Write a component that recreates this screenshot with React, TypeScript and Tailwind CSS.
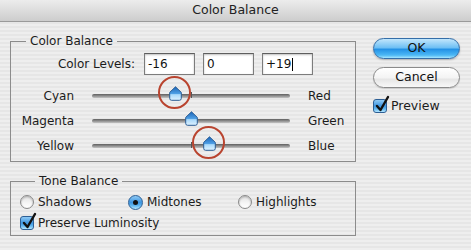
import { useId } from 'react';

const font = { fontFamily: '"DejaVu Sans", "Liberation Sans", sans-serif' };

type SliderRow = { left: string; right: string; value: number; marked?: boolean };

const sliderRows: SliderRow[] = [
  { left: 'Cyan', right: 'Red', value: -16, marked: true },
  { left: 'Magenta', right: 'Green', value: 0 },
  { left: 'Yellow', right: 'Blue', value: 19, marked: true },
];

const TRACK_WIDTH = 198;

function Thumb() {
  const id = useId();
  return (
    <svg width="13" height="15" viewBox="0 0 13 15" aria-hidden="true">
      <defs>
        <linearGradient id={id} x1="0" y1="0" x2="0" y2="1">
          <stop offset="0" stopColor="#1a64b8" />
          <stop offset="0.5" stopColor="#4f9fe4" />
          <stop offset="0.58" stopColor="#a9d9fb" />
          <stop offset="1" stopColor="#def2ff" />
        </linearGradient>
      </defs>
      <path
        d="M6.5 0.8 L12.3 6.4 V12.4 Q12.3 14.3 10.4 14.3 H2.6 Q0.7 14.3 0.7 12.4 V6.4 Z"
        fill={`url(#${id})`}
        stroke="#2a5c93"
        strokeWidth="1"
      />
    </svg>
  );
}

function Slider({ value, marked }: { value: number; marked?: boolean }) {
  // thumb centre along the track, -100..+100
  const x = TRACK_WIDTH / 2 + value * 0.99;
  return (
    <div className="relative flex items-center w-[198px] h-[25px]">
      <div className="w-full h-[4px] rounded-full bg-linear-to-b from-[#5f5f5f] to-[#c4c4c4]" />
      <div className="absolute left-[99px] top-[9px] w-px h-[6px] bg-[#555]" />
      <div className="absolute top-[3px]" style={{ left: x - 6.5 }}>
        <Thumb />
      </div>
      {marked && (
        <div
          className="absolute top-[-7px] w-[33px] h-[33px] rounded-full border-[2.5px] border-[#b9442f] pointer-events-none z-10"
          style={{ left: x - 17.5 }}
        />
      )}
    </div>
  );
}

function Field({ value, caret }: { value: string; caret?: boolean }) {
  return (
    <div className="w-[51px] h-[22px] bg-white border border-[#7c7c7c] border-t-[#5e5e5e] shadow-[inset_0_1px_2px_rgba(0,0,0,0.25)] flex items-center pl-[3px] text-[12px] text-[#111]">
      {value}
      {caret && <span className="ml-px w-px h-[13px] bg-black" />}
    </div>
  );
}

function AquaCheck() {
  return (
    <div className="relative w-[14px] h-[14px] shrink-0 rounded-[3px] border border-[#2d5f95] bg-[linear-gradient(to_bottom,#8fcaf5_0%,#3d95e0_50%,#63b8f0_75%,#b4e6ff_100%)]">
      <svg
        className="absolute left-[1px] top-[-4px] overflow-visible"
        width="14"
        height="16"
        viewBox="0 0 14 16"
        aria-hidden="true"
      >
        <path d="M2 10 L5.5 14 L13 1" fill="none" stroke="#111" strokeWidth="2.4" strokeLinecap="round" strokeLinejoin="round" />
      </svg>
    </div>
  );
}

function Radio({ selected, label, width }: { selected?: boolean; label: string; width: string }) {
  return (
    <div className={`flex items-center gap-[4px] ${width}`}>
      {selected ? (
        <div className="w-[15px] h-[15px] shrink-0 rounded-full border border-[#2d5f95] bg-[linear-gradient(to_bottom,#8fcaf5_0%,#3d95e0_50%,#63b8f0_75%,#b4e6ff_100%)] flex items-center justify-center">
          <div className="w-[5px] h-[5px] rounded-full bg-[#111]" />
        </div>
      ) : (
        <div className="w-[14px] h-[14px] shrink-0 rounded-full border border-[#8a8a8a] bg-[linear-gradient(to_bottom,#e2e2e2_0%,#f6f6f6_60%,#ffffff_100%)] shadow-[inset_0_1px_2px_rgba(0,0,0,0.25)]" />
      )}
      <span>{label}</span>
    </div>
  );
}

export default function App() {
  return (
    <div
      className="w-[471px] h-[250px] flex flex-col overflow-hidden text-[12px] text-[#1c1c1c] bg-[repeating-linear-gradient(to_bottom,#eeeeee_0px,#eeeeee_2px,#e6e6e6_2px,#e6e6e6_4px)]"
      style={font}
    >
      {/* Title bar */}
      <div className="h-[22px] shrink-0 flex items-center justify-center bg-linear-to-b from-[#ececec] to-[#cdcdcd] border-b border-[#9a9a9a] text-[12.5px] text-[#222]">
        Color Balance
      </div>

      <div className="flex pl-[10px] pt-[11px] gap-[17px]">
        {/* Left column */}
        <div className="w-[346px] flex flex-col">
          <fieldset className="border border-[#8c8c8c] pb-[3px]">
            <legend className="ml-[15px] px-[4px] leading-[16px]">Color Balance</legend>
            <div className="flex items-center gap-[9px] pt-[4px]">
              <span className="w-[124px] text-right">Color Levels:</span>
              <div className="flex gap-[8px]">
                <Field value="-16" />
                <Field value="0" />
                <Field value="+19" caret />
              </div>
            </div>
            <div className="flex flex-col mt-[8px]">
              {sliderRows.map((row) => (
                <div key={row.left} className="flex items-center h-[25px]">
                  <span className="w-[63px] text-right">{row.left}</span>
                  <div className="ml-[18px]">
                    <Slider value={row.value} marked={row.marked} />
                  </div>
                  <span className="ml-[18px]">{row.right}</span>
                </div>
              ))}
            </div>
          </fieldset>

          <fieldset className="mt-[11px] border border-[#8c8c8c] pl-[9px] pt-[4px] pb-[3px]">
            <legend className="ml-[15px] px-[4px] leading-[16px]">Tone Balance</legend>
            <div className="flex items-center h-[18px]">
              <Radio label="Shadows" width="w-[108px]" />
              <Radio label="Midtones" width="w-[110px]" selected />
              <Radio label="Highlights" width="w-[100px]" />
            </div>
            <div className="flex items-center gap-[4px] h-[18px] mt-[3px]">
              <AquaCheck />
              <span>Preserve Luminosity</span>
            </div>
          </fieldset>
        </div>

        {/* Right column */}
        <div className="w-[87px] flex flex-col pt-[5px]">
          <button className="h-[21px] rounded-full border border-[#356ea8] bg-[linear-gradient(to_bottom,#c2e6fc_0%,#6fc0f4_45%,#2492e6_55%,#4cb8f5_85%,#a6e6ff_100%)] text-[12.5px] text-[#111] shadow-[0_1px_2px_rgba(0,0,0,0.25)]">
            OK
          </button>
          <button className="mt-[8px] h-[21px] rounded-full border border-[#8a8a8a] bg-[linear-gradient(to_bottom,#ffffff_0%,#f4f4f4_50%,#e6e6e6_60%,#f8f8f8_100%)] text-[12.5px] text-[#111] shadow-[0_1px_1px_rgba(0,0,0,0.15)]">
            Cancel
          </button>
          <div className="mt-[10px] flex items-center gap-[4px] h-[16px]">
            <AquaCheck />
            <span className="text-[12.5px]">Preview</span>
          </div>
        </div>
      </div>
    </div>
  );
}
